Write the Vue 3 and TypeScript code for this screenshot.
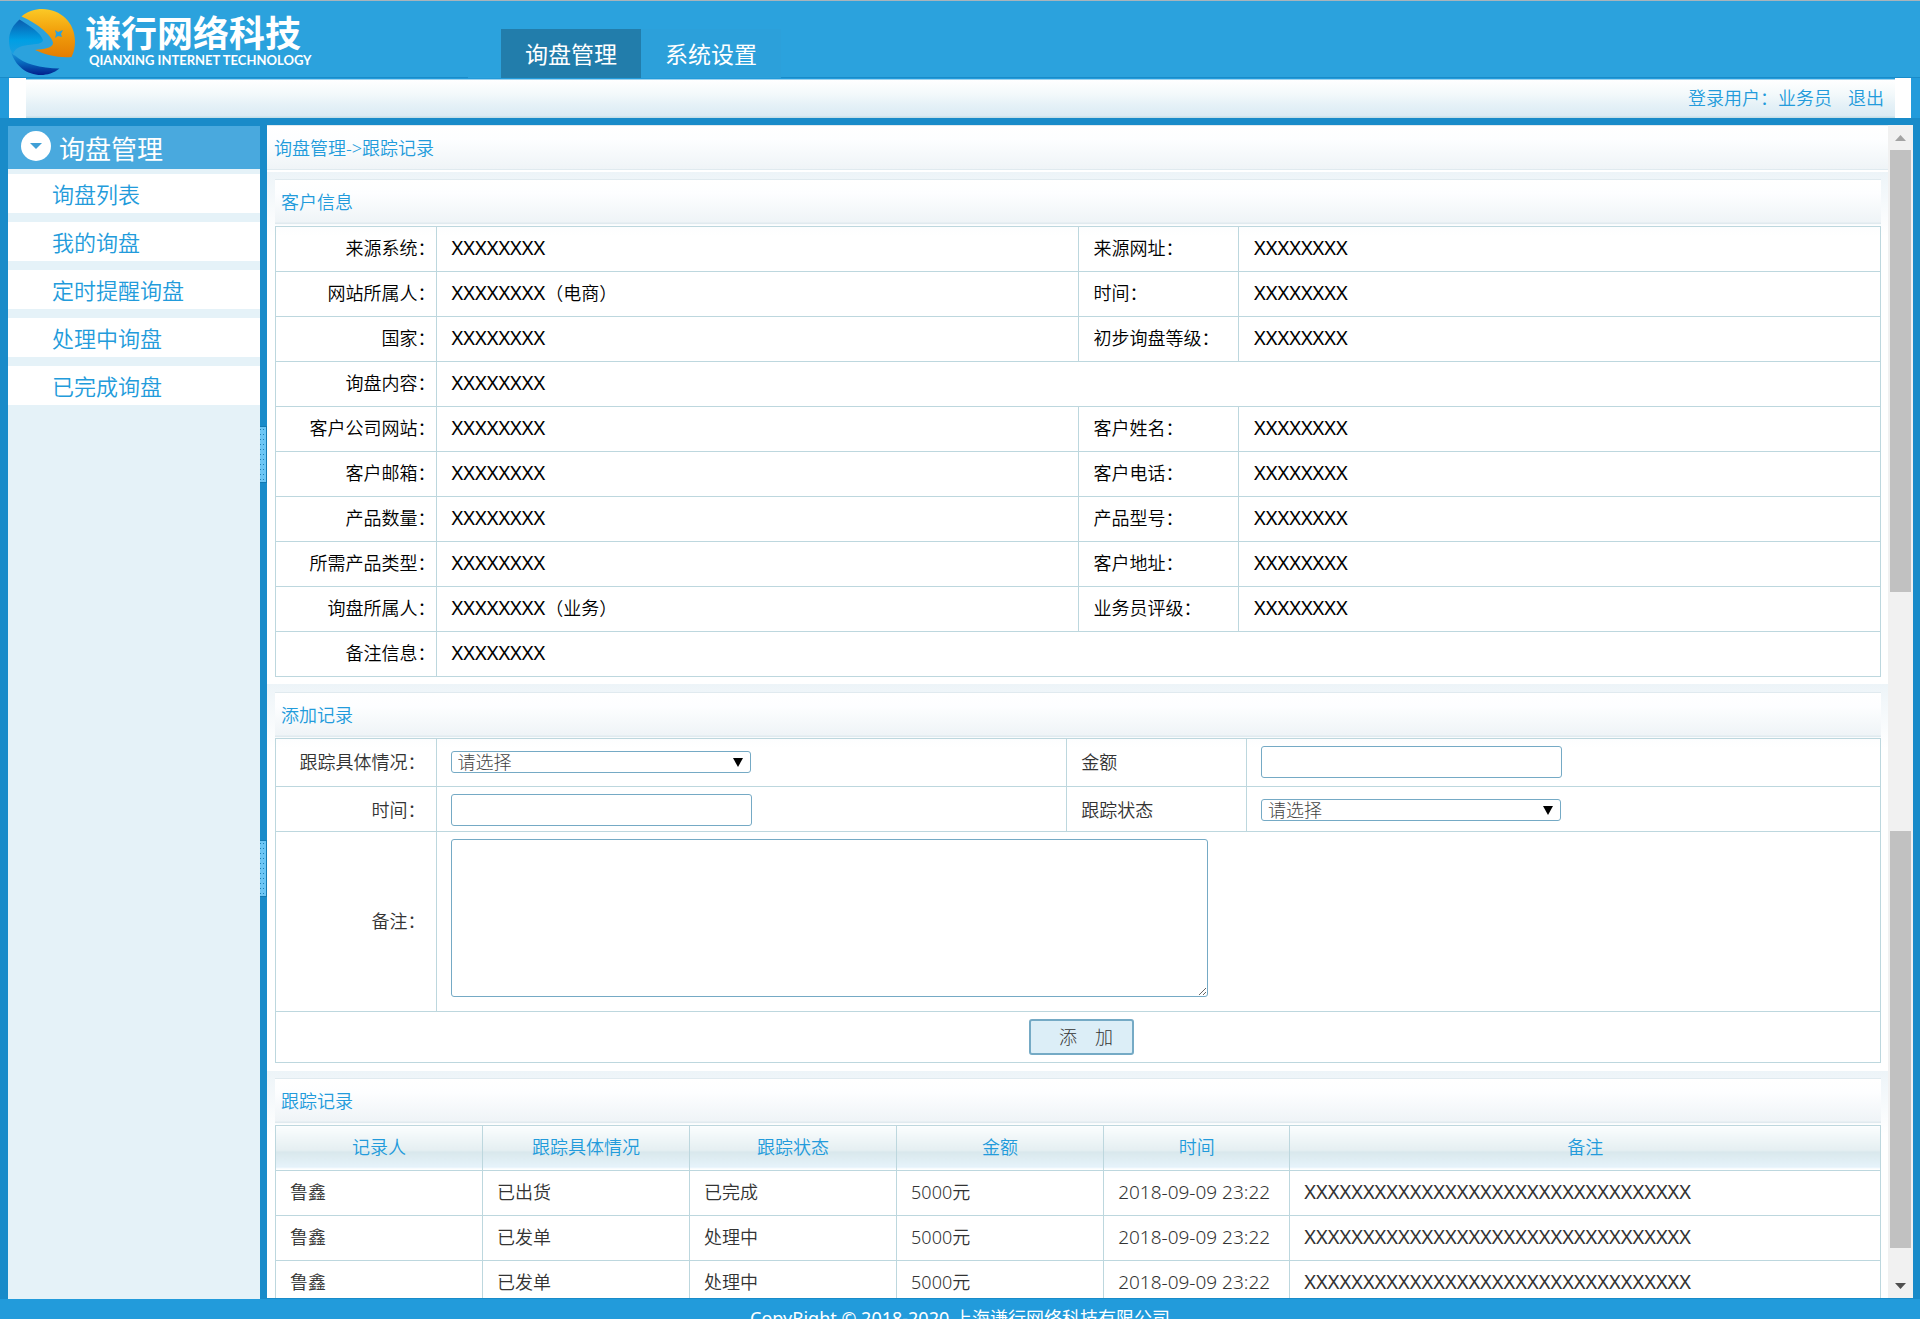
<script setup lang="ts">
import { ref } from 'vue'

const menu: string[] = ['询盘列表', '我的询盘', '定时提醒询盘', '处理中询盘', '已完成询盘']

interface InfoRow {
  label: string
  value: string
  dept?: string
  label2?: string
  value2?: string
}

const X = 'XXXXXXXX'
const info: InfoRow[] = [
  { label: '来源系统：', value: X, label2: '来源网址：', value2: X },
  { label: '网站所属人：', value: X, dept: '（电商）', label2: '时间：', value2: X },
  { label: '国家：', value: X, label2: '初步询盘等级：', value2: X },
  { label: '询盘内容：', value: X },
  { label: '客户公司网站：', value: X, label2: '客户姓名：', value2: X },
  { label: '客户邮箱：', value: X, label2: '客户电话：', value2: X },
  { label: '产品数量：', value: X, label2: '产品型号：', value2: X },
  { label: '所需产品类型：', value: X, label2: '客户地址：', value2: X },
  { label: '询盘所属人：', value: X, dept: '（业务）', label2: '业务员评级：', value2: X },
  { label: '备注信息：', value: X },
]

const heads: string[] = ['记录人', '跟踪具体情况', '跟踪状态', '金额', '时间', '备注']
const note = 'X'.repeat(33)
const records: string[][] = [
  ['鲁鑫', '已出货', '已完成', '5000元', '2018-09-09 23:22', note],
  ['鲁鑫', '已发单', '处理中', '5000元', '2018-09-09 23:22', note],
  ['鲁鑫', '已发单', '处理中', '5000元', '2018-09-09 23:22', note],
]

const situation = ref('')
const status = ref('')
const amount = ref('')
const time = ref('')
const remark = ref('')
</script>

<template>
  <div class="page">
    <header class="header">
      <div class="logo">
        <svg class="mark" viewBox="0 0 68 68" width="68" height="68" aria-hidden="true">
          <defs>
            <linearGradient id="gold" x1="0" y1="0" x2="0" y2="1">
              <stop offset="0" stop-color="#fbc926" />
              <stop offset="0.45" stop-color="#f2a10c" />
              <stop offset="1" stop-color="#e47d02" />
            </linearGradient>
            <linearGradient id="sky" x1="0" y1="0" x2="0" y2="1">
              <stop offset="0" stop-color="#0a5cae" />
              <stop offset="0.6" stop-color="#009fe4" />
              <stop offset="1" stop-color="#1a9ee0" />
            </linearGradient>
            <linearGradient id="deep" x1="0" y1="0" x2="0" y2="1">
              <stop offset="0" stop-color="#1a9ee0" />
              <stop offset="0.5" stop-color="#0765bb" />
              <stop offset="1" stop-color="#021f8c" />
            </linearGradient>
          </defs>
          <path d="M13.500 8.500C20 3 27 1 34 1c19 0 33 14 33 32 0 6-1 11-3.500 16C50 50 38 47 27 42c9-1 18-2 18-7C45 29 31 16 13.500 8.500z" fill="url(#gold)" />
          <path d="M11.500 11.500C22 18 33 25 35 32c0 4-7 4-15 5-8 1-13 3-15 9C2 42 1 38 1 33 1 24 5 17 11.500 11.500z" fill="url(#sky)" />
          <path d="M3 43.500c2 3 3 4 4 4 8 8 26 13 44.500 13C46 65 39 67 33 67 19 67 7 58 3 43.500z" fill="url(#deep)" />
          <path d="M47 22l3 2 5-2-2 4 1 3-4-1-3 2 1-4z" fill="#2ba2dd" />
        </svg>
        <div class="brand">
          <span class="brand-cn">谦行网络科技</span>
          <span class="brand-en">QIANXING INTERNET TECHNOLOGY</span>
        </div>
      </div>
      <nav class="tabs">
        <a href="#" class="tab active">询盘管理</a>
        <a href="#" class="tab">系统设置</a>
      </nav>
    </header>

    <div class="userbar">
      <div class="userbar-in">
        <span>登录用户：业务员</span>
        <a href="#">退出</a>
      </div>
    </div>

    <div class="body">
      <aside class="side">
        <h2 class="side-head">
          <svg viewBox="0 0 32 32" width="32" height="32" aria-hidden="true">
            <circle cx="16" cy="16" r="15" fill="#fff" />
            <path d="M10 13h12l-6 6z" fill="#3f9fd6" />
          </svg>
          <span>询盘管理</span>
        </h2>
        <a v-for="m in menu" :key="m" href="#" class="side-item">{{ m }}</a>
      </aside>

      <div class="splitter">
        <i class="grip"></i>
        <i class="grip"></i>
      </div>

      <main class="main">
        <h1 class="crumb">询盘管理-&gt;跟踪记录</h1>

        <section class="section">
          <h3 class="section-head">客户信息</h3>
          <table class="grid info">
            <colgroup><col class="w10" /><col class="w40" /><col class="w10" /><col class="w40" /></colgroup>
            <tbody>
              <tr v-for="r in info" :key="r.label">
                <th class="right">{{ r.label }}</th>
                <td :colspan="r.label2 ? 1 : 3">{{ r.value }}<span v-if="r.dept" class="dept">{{ r.dept }}</span></td>
                <template v-if="r.label2">
                  <th>{{ r.label2 }}</th>
                  <td>{{ r.value2 }}</td>
                </template>
              </tr>
            </tbody>
          </table>
        </section>

        <section class="section entry">
          <h3 class="section-head">添加记录</h3>
          <form @submit.prevent>
            <table class="grid form">
              <colgroup><col class="w10" /><col class="f2" /><col class="f3" /><col /></colgroup>
              <tbody>
                <tr class="tall">
                  <th class="right"><label for="situation">跟踪具体情况：</label></th>
                  <td>
                    <span class="select">
                      <select id="situation" v-model="situation"><option value="">请选择</option></select>
                    </span>
                  </td>
                  <th><label for="amount">金额</label></th>
                  <td><input id="amount" v-model="amount" type="text" /></td>
                </tr>
                <tr class="second">
                  <th class="right"><label for="time">时间：</label></th>
                  <td><input id="time" v-model="time" type="text" /></td>
                  <th><label for="status">跟踪状态</label></th>
                  <td>
                    <span class="select">
                      <select id="status" v-model="status"><option value="">请选择</option></select>
                    </span>
                  </td>
                </tr>
                <tr class="area">
                  <th class="right"><label for="remark">备注：</label></th>
                  <td colspan="3"><textarea id="remark" v-model="remark"></textarea></td>
                </tr>
                <tr class="submit">
                  <td colspan="4"><button type="submit">添　加</button></td>
                </tr>
              </tbody>
            </table>
          </form>
        </section>

        <section class="section">
          <h3 class="section-head">跟踪记录</h3>
          <table class="grid records">
            <colgroup>
              <col class="r1" /><col class="r1" /><col class="r1" /><col class="r1" /><col class="r5" /><col />
            </colgroup>
            <thead>
              <tr><th v-for="h in heads" :key="h">{{ h }}</th></tr>
            </thead>
            <tbody>
              <tr v-for="(r, i) in records" :key="i">
                <td v-for="(c, j) in r" :key="j" :class="{ date: j === 4, note: j === 5 }">{{ c }}</td>
              </tr>
            </tbody>
          </table>
        </section>
      </main>

      <div class="scroll" aria-hidden="true">
        <svg viewBox="0 0 25 25" width="25" height="25"><path d="M7 16h11l-5.500-6z" fill="#a3a3a3" /></svg>
        <i class="thumb first"></i>
        <i class="thumb second"></i>
        <svg viewBox="0 0 25 25" width="25" height="25"><path d="M7 10h11l-5.500 6z" fill="#505050" /></svg>
      </div>
    </div>

    <footer class="footer">CopyRight © 2018-2020 上海谦行网络科技有限公司</footer>
  </div>
</template>

<style>
body {
  margin: 0;
}
</style>

<style scoped>
.page {
  display: flex;
  flex-direction: column;
  height: 100vh;
  overflow: hidden;
  background: #198bc9;
  font-family: "Noto Sans", "Noto Sans CJK SC", sans-serif;
  font-size: 18px;
  font-weight: 350;
  color: #000;
}
.page * {
  box-sizing: border-box;
}
a {
  color: inherit;
  text-decoration: none;
}
h1, h2, h3 {
  margin: 0;
  font-weight: inherit;
}

.header {
  flex: none;
  display: flex;
  height: 78px;
  border-top: 1px solid #a9b4bb;
  background: linear-gradient(#198bc9, #198bc9) bottom / 100% 1px no-repeat, #2ba2dd;
}
.logo {
  display: flex;
  width: 468px;
  padding: 7px 0 0 8px;
}
.mark {
  flex: none;
}
.brand {
  display: flex;
  flex-direction: column;
  gap: 4px;
  padding: 11px 0 0 9px;
  color: #fff;
}
.brand-cn {
  font-size: 36px;
  line-height: 30px;
  font-weight: 700;
  white-space: nowrap;
}
.brand-en {
  padding-left: 4px;
  font-family: Lato, sans-serif;
  font-size: 13px;
  line-height: 14px;
  font-weight: 700;
  white-space: nowrap;
}
.tabs {
  display: flex;
  height: 77px;
  padding: 28px 0 0 33px;
  background: #2ba2dd;
}
.tab {
  width: 140px;
  line-height: 50px;
  text-align: center;
  font-size: 23px;
  font-weight: 400;
  color: #fff;
  background: #2ca0da;
}
.tab.active {
  background: #227dab;
}

.userbar {
  flex: none;
  height: 40px;
  padding: 0 9px;
  background: #229bdb;
}
.userbar-in {
  display: flex;
  justify-content: flex-end;
  gap: 16px;
  height: 40px;
  padding-right: 11px;
  border: solid #fff;
  border-width: 0 16px 0 17px;
  line-height: 41px;
  color: #229bdb;
  background: linear-gradient(#229bdb 0, #229bdb 1px, #9fd3ee 1px, #9fd3ee 2px, #fff 2px, #f3f9fb 16px, #e5f1f7 27px, #dbebf4 38px, #c5dfe8 39px);
}

.body {
  flex: 1;
  min-height: 0;
  display: flex;
  padding: 7px 7px 0 8px;
}
.side {
  flex: none;
  width: 252px;
  margin-top: 1px;
  background: #e5f2f8;
}
.side-head {
  display: flex;
  align-items: center;
  gap: 7px;
  height: 43px;
  margin-bottom: 5px;
  padding: 0 0 4px 12px;
  background: #49a9de;
  color: #fff;
  font-size: 26px;
  font-weight: 400;
}
.side-head span {
  padding-top: 4px;
}
.side-item {
  display: block;
  height: 39px;
  margin-bottom: 9px;
  padding-left: 44px;
  line-height: 40px;
  font-size: 22px;
  color: #229bdb;
  background: #fff;
}
.splitter {
  flex: none;
  display: flex;
  flex-direction: column;
  gap: 357px;
  width: 7px;
  padding-top: 301px;
}
.grip {
  flex: none;
  height: 57px;
  border: 1px solid #1279b2;
  border-left: 0;
  background:
    repeating-linear-gradient(#6cc6f5 0 2px, transparent 2px 3px, #6cc6f5 3px 5px) 0 0 / 100% 5px,
    repeating-linear-gradient(90deg, #1c7fb5 0 1px, #6cc6f5 1px 3px);
}

.main {
  flex: 1;
  min-width: 0;
  margin-bottom: 1px;
  overflow: hidden;
  background: #fff;
}
.crumb {
  height: 47px;
  padding-left: 7px;
  border-top: 1px solid #e0eaef;
  line-height: 45px;
  font-size: 18px;
  color: #229bdb;
  background: linear-gradient(#fff, #fdfeff 30%, #eff4f7 43px, #e0eaef 43px, #e0eaef 44px, #fff 44px);
}
.section {
  padding: 7px 7px 7px 8px;
  background: linear-gradient(#edf4f8, #fff 64px) no-repeat;
}
.section-head {
  height: 46px;
  margin-bottom: 1px;
  padding-left: 6px;
  border-top: 1px solid #e0eaef;
  line-height: 45px;
  font-size: 18px;
  color: #229bdb;
  background: linear-gradient(#fff, #fdfeff 30%, #eff4f7 42px, #e0eaef 43px, #e0eaef 44px, #f8fbfc 44px);
}
.section.entry {
  padding-top: 8px;
  padding-bottom: 8px;
}
.entry .section-head {
  margin-bottom: 0;
}
.grid {
  width: 100%;
  border-collapse: collapse;
  table-layout: fixed;
}
.grid th,
.grid td {
  height: 45px;
  padding: 0 0 2px 14px;
  border: 1px solid #bdd7de;
  text-align: left;
  font-weight: inherit;
  line-height: 24px;
  white-space: nowrap;
}
.info th,
.info td {
  padding-left: 15px;
}
.info td {
  font-size: 20px;
  font-weight: 400;
}
.info .dept {
  font-size: 18px;
  font-weight: 350;
}
.grid .right {
  text-align: right;
}
.info .right {
  padding-right: 0;
}
.w10 { width: 10%; }
.w40 { width: 40%; }
.f2 { width: 39.3%; }
.f3 { width: 11.2%; }
.r1 { width: 12.9%; }
.r5 { width: 11.6%; }

.form,
.records {
  color: #333;
}
.form .right {
  padding-right: 10px;
}
.form .tall > * {
  height: 48px;
}
.form .second > * {
  padding-top: 2px;
  padding-bottom: 0;
}
.form .area > * {
  height: 180px;
}
.form .submit td {
  height: 51px;
  padding: 0 0 0 6px;
  text-align: center;
}
input,
select,
textarea {
  display: block;
  border: 1px solid #75aac5;
  border-radius: 3px;
  background: #fff;
  font: inherit;
  color: #444;
  outline: none;
}
input {
  width: 301px;
  height: 32px;
}
.select {
  display: block;
  position: relative;
  width: 300px;
}
.select::after {
  content: "";
  position: absolute;
  right: 8px;
  top: 7px;
  border: solid transparent;
  border-width: 9px 5px 0;
  border-top-color: #000;
  pointer-events: none;
}
select {
  appearance: none;
  width: 300px;
  height: 22px;
  padding: 0 6px;
  font-weight: 300;
  line-height: 20px;
}
textarea {
  width: 757px;
  height: 158px;
  margin-bottom: 6px;
}
button {
  width: 105px;
  height: 36px;
  padding: 0 0 0 10px;
  border: 2px solid #75aac5;
  border-radius: 3px;
  background: #dceef7;
  font: inherit;
  font-weight: 300;
  color: #333;
}
.records thead th {
  padding: 0 0 2px;
  text-align: center;
  color: #229bdb;
  background: linear-gradient(#fafdfe, #e5eff2 54%, #d9e8ec 58%, #e6f3fb 93%, #fff 96%);
}
.records .date {
  font-size: 19px;
}
.records .note {
  font-size: 20px;
  font-weight: 400;
}

.scroll {
  flex: none;
  display: flex;
  flex-direction: column;
  width: 25px;
  margin-bottom: 1px;
  background: #f1f1f1;
}
.scroll svg {
  flex: none;
}
.thumb {
  margin: 0 2px;
  background: #c1c1c1;
}
.thumb.first {
  flex: 442;
  margin-bottom: 239px;
}
.thumb.second {
  flex: 417;
  margin-bottom: 25px;
}

.footer {
  flex: none;
  height: 20px;
  overflow: hidden;
  line-height: 38px;
  text-align: center;
  font-weight: 400;
  color: #fff;
  background: #229bdb;
}
</style>
